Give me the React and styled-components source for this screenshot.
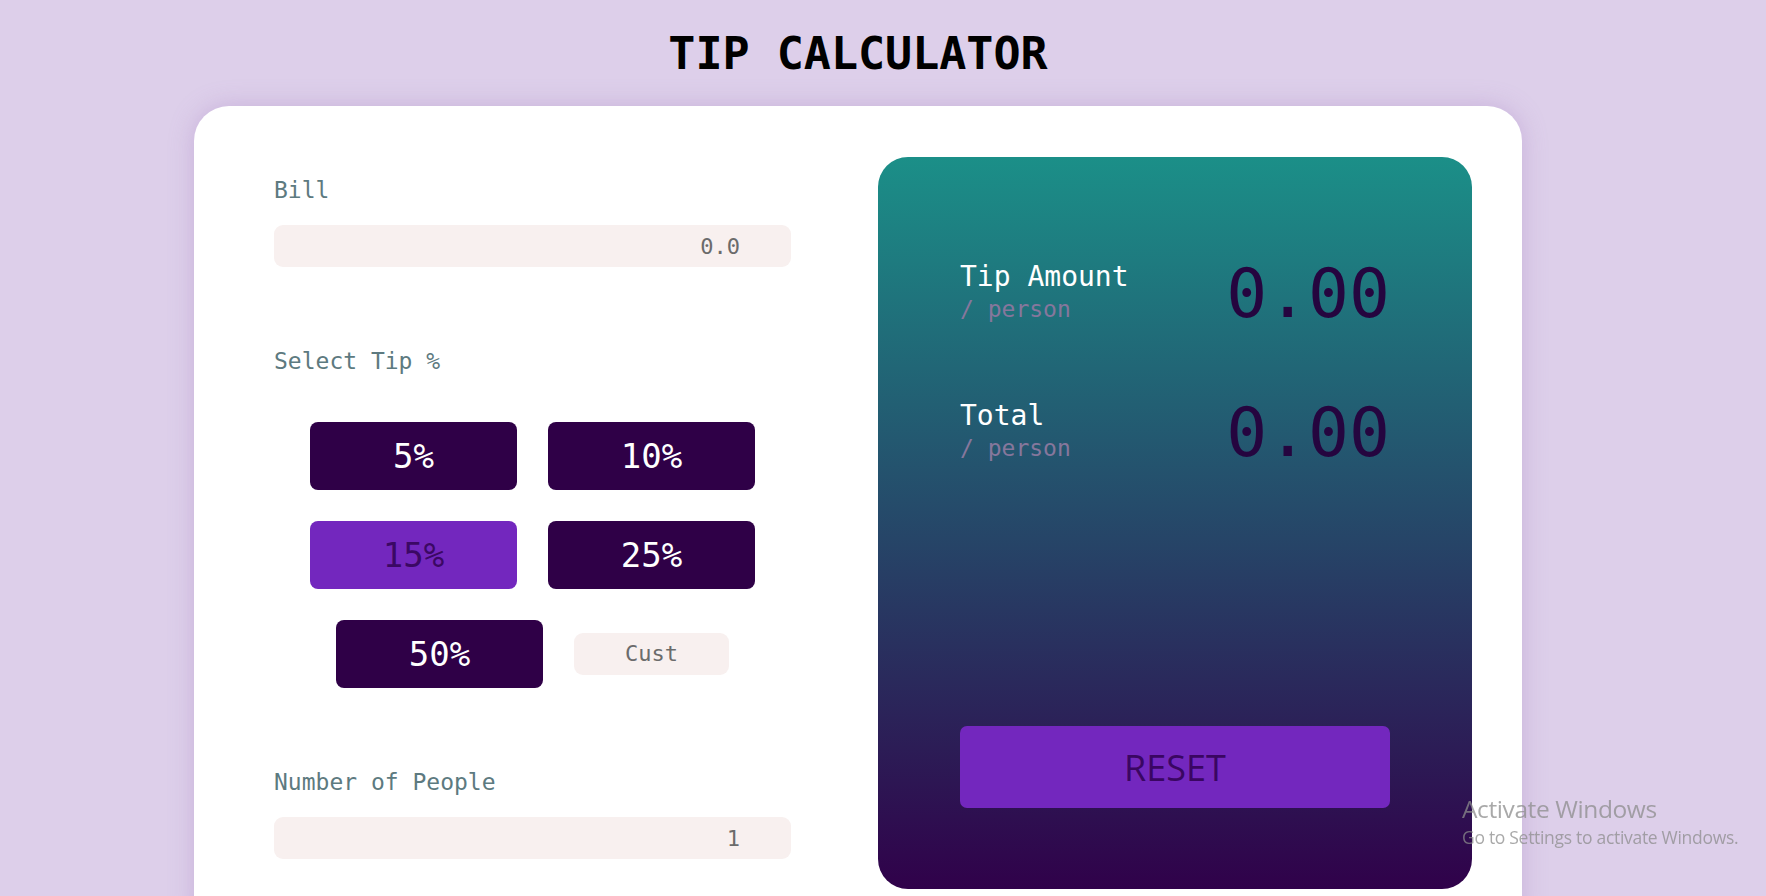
import React, { useState } from "react";
import styled, { createGlobalStyle } from "styled-components";

const GlobalStyle = createGlobalStyle`
  html, body {
    margin: 0;
    padding: 0;
    background: #ddcfea;
    overflow: hidden;
  }
  body {
    font-family: "DejaVu Sans Mono", "Liberation Mono", monospace;
  }
  * {
    box-sizing: border-box;
  }
`;

const Page = styled.div`
  width: 1766px;
  height: 896px;
  padding-right: 50px;
  display: flex;
  flex-direction: column;
  align-items: center;

  & > * {
    flex-shrink: 0;
  }
`;

const Title = styled.h1`
  margin: 0;
  padding-top: 27px;
  height: 106px;
  font-size: 45px;
  line-height: 1.2;
  font-weight: bold;
  color: #000;
`;

const Card = styled.div`
  width: 1328px;
  background: #fff;
  border-radius: 35px;
  box-shadow: 0 0 24px rgba(160, 120, 190, 0.35);
  display: flex;
  align-items: flex-start;
  gap: 87px;
  padding: 51px 50px 50px 80px;
`;

const Form = styled.div`
  width: 517px;
  padding-top: 20px;
  display: flex;
  flex-direction: column;
`;

const Label = styled.label`
  font-size: 23px;
  line-height: 1.15;
  color: #5d7a80;
  margin-top: ${(p) => p.$top || 0}px;
`;

const Field = styled.input`
  width: 100%;
  height: 42px;
  margin-top: 22px;
  border: none;
  outline: none;
  border-radius: 9px;
  background: #f8f0ef;
  font-family: inherit;
  font-size: 22px;
  color: #6b6b6b;
  text-align: right;
  padding: 0 51px 0 12px;
`;

const TipGrid = styled.div`
  margin-top: 47px;
  display: flex;
  flex-wrap: wrap;
  justify-content: center;
  align-items: center;
  column-gap: 31px;
  row-gap: 31px;
  padding: 0 5px;
`;

const TipButton = styled.button`
  width: 207px;
  height: 68px;
  border: none;
  border-radius: 8px;
  cursor: pointer;
  font-family: inherit;
  font-size: 34px;
  background: ${(p) => (p.$active ? "#7327be" : "#2f0047")};
  color: ${(p) => (p.$active ? "#3b0864" : "#ffffff")};
`;

const CustomField = styled.input`
  width: 155px;
  height: 42px;
  border: none;
  outline: none;
  border-radius: 9px;
  background: #f8f0ef;
  font-family: inherit;
  font-size: 22px;
  color: #6b6b6b;
  text-align: center;

  &::placeholder {
    color: #6b6b6b;
  }
`;

const Results = styled.div`
  width: 594px;
  height: 732px;
  border-radius: 30px;
  background: linear-gradient(180deg, #1b8f88 0%, #30014a 100%);
  padding: 103px 82px 81px 82px;
  display: flex;
  flex-direction: column;
`;

const ResultRow = styled.div`
  display: flex;
  justify-content: space-between;
  align-items: flex-start;
  margin-top: ${(p) => p.$top || 0}px;
`;

const ResultText = styled.div`
  display: flex;
  flex-direction: column;
`;

const ResultName = styled.span`
  font-size: 28px;
  line-height: 1.2;
  color: #ffffff;
`;

const PerPerson = styled.span`
  font-size: 23px;
  line-height: 1.2;
  margin-top: 2px;
  color: #86779c;
`;

const Amount = styled.span`
  font-size: 68px;
  line-height: 1;
  color: #25053f;
`;

const ResetButton = styled.button`
  margin-top: auto;
  width: 100%;
  height: 82px;
  border: none;
  border-radius: 7px;
  background: #7327be;
  color: #3a0662;
  font-family: "Open Sans", "Noto Sans", sans-serif;
  font-size: 36px;
  cursor: pointer;
`;

const Watermark = styled.div`
  position: fixed;
  left: 1462px;
  top: 794px;
  font-family: "Open Sans", "Noto Sans", sans-serif;
  color: rgba(140, 140, 140, 0.75);
  pointer-events: none;
  line-height: 1.2;
`;

const WatermarkTitle = styled.div`
  font-size: 24.5px;
  letter-spacing: -0.4px;
`;

const WatermarkSub = styled.div`
  font-size: 17.5px;
  margin-top: 4px;
  letter-spacing: -0.3px;
`;

const tips = [5, 10, 15, 25, 50];

export default function App() {
  const [tip, setTip] = useState(15);

  return (
    <>
      <GlobalStyle />
      <Page>
        <Title>TIP CALCULATOR</Title>
        <Card>
          <Form>
            <Label>Bill</Label>
            <Field defaultValue="0.0" />

            <Label $top={81}>Select Tip %</Label>
            <TipGrid>
              {tips.map((t) => (
                <TipButton key={t} $active={t === tip} onClick={() => setTip(t)}>
                  {t}%
                </TipButton>
              ))}
              <CustomField placeholder="Cust" />
            </TipGrid>

            <Label $top={81}>Number of People</Label>
            <Field defaultValue="1" />
          </Form>

          <Results>
            <ResultRow>
              <ResultText>
                <ResultName>Tip Amount</ResultName>
                <PerPerson>/ person</PerPerson>
              </ResultText>
              <Amount>0.00</Amount>
            </ResultRow>
            <ResultRow $top={71}>
              <ResultText>
                <ResultName>Total</ResultName>
                <PerPerson>/ person</PerPerson>
              </ResultText>
              <Amount>0.00</Amount>
            </ResultRow>
            <ResetButton>RESET</ResetButton>
          </Results>
        </Card>
      </Page>
      <Watermark>
        <WatermarkTitle>Activate Windows</WatermarkTitle>
        <WatermarkSub>Go to Settings to activate Windows.</WatermarkSub>
      </Watermark>
    </>
  );
}
